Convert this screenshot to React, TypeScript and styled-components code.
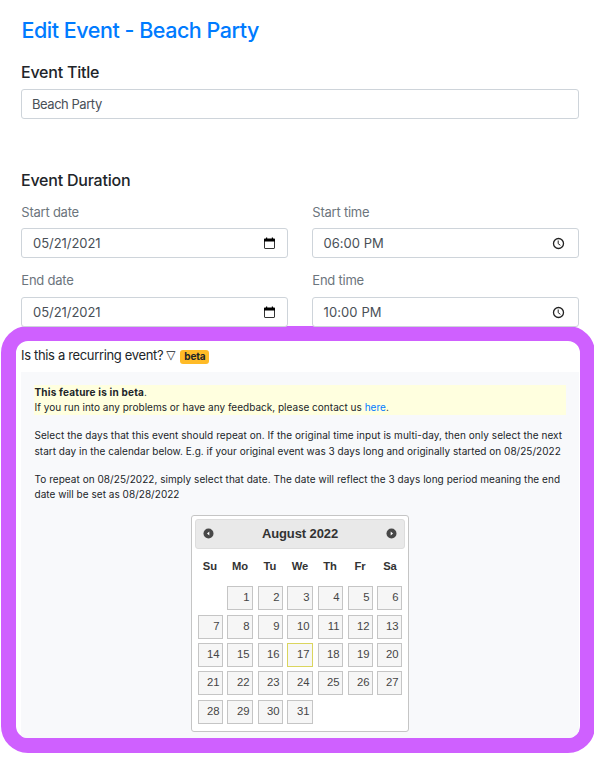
import React from "react";
import styled, { createGlobalStyle } from "styled-components";

const GlobalStyle = createGlobalStyle`
  *, *::before, *::after { box-sizing: border-box; }
  html, body { margin: 0; overflow: hidden; background: #fff; }
  body { font-family: Inter, "Liberation Sans", sans-serif; color: #212529; }
`;

const Page = styled.main`
  width: 594px;
  height: 758px;
  padding-top: 15px;
  overflow: hidden;
`;

const Form = styled.form`
  width: 558px;
  margin-left: 21px;
`;

const PageTitle = styled.h1`
  margin: 0 0 15px;
  padding-left: 0.5px;
  font-size: 21.5px;
  line-height: 30px;
  font-weight: 550;
  letter-spacing: -0.48px;
  color: #007bff;
  white-space: nowrap;
`;

const SectionTitle = styled.h2`
  margin: 0;
  font-size: 16px;
  line-height: 24px;
  font-weight: 500;
  letter-spacing: -0.22px;
`;

const Control = styled.div<{ $spacing?: number; $time?: boolean }>`
  display: flex;
  align-items: center;
  justify-content: space-between;
  height: 30px;
  padding: 0 ${(p) => (p.$time ? 13 : 11)}px 0 ${(p) => (p.$time ? 10.5 : 11)}px;
  border: 1px solid #ced4da;
  border-radius: 3px;
  background: #fff;
  color: #495057;
  font-size: 13px;
  line-height: 28px;
  letter-spacing: ${(p) => p.$spacing ?? 0}px;
`;

const TitleControl = styled(Control)`
  margin: 5px 0 49px;
  padding-left: 10px;
`;

const FieldGrid = styled.div`
  display: grid;
  grid-template-columns: 267px 267px;
  column-gap: 24px;
  margin-top: 10px;
`;

const Field = styled.div<{ $gap: number }>`
  display: flex;
  flex-direction: column;
  gap: ${(p) => p.$gap}px;
  padding-bottom: 12px;

  &:nth-child(n + 3) { padding-bottom: 0; }
`;

const Label = styled.label`
  padding-left: 0.3px;
  font-size: 13px;
  line-height: 20px;
  letter-spacing: -0.23px;
  color: #6c757d;
`;

const PickerIcon = styled.svg`
  display: block;
  flex: none;
  width: 13px;
  height: 13px;
`;

const Highlight = styled.section`
  width: 594px;
  height: 427px;
  margin: -1px 0 0 1px;
  border: 15px solid #cf60ff;
  border-radius: 27px;
  overflow: hidden;
  background: #fff;
`;

const RecurringHeader = styled.div`
  display: flex;
  align-items: center;
  height: 31px;
  padding: 0 0 2px 5px;
  font-size: 13px;
  line-height: 29px;
  letter-spacing: -0.34px;
`;

const Arrow = styled.span`
  width: 10px;
  margin-left: 3px;
  font-family: "DejaVu Sans", sans-serif;
  font-size: 12px;
  letter-spacing: 0;
`;

const Badge = styled.span`
  width: 29px;
  height: 14px;
  margin: 2px 0 0 4px;
  border-radius: 3px;
  background: #ffbb27;
  font-size: 10px;
  line-height: 13px;
  font-weight: 700;
  letter-spacing: -0.2px;
  text-align: center;
`;

const Panel = styled.div`
  height: 366px;
  margin: 0 1px 0 5px;
  padding: 13px;
  background: #f8f9fb;
  font-size: 10px;
  line-height: 15px;
  white-space: nowrap;
`;

const Notice = styled.div`
  height: 30px;
  background: #ffffdf;
`;

const Line = styled.div<{ $spacing: number; $bold?: boolean }>`
  padding-left: 0.5px;
  letter-spacing: ${(p) => p.$spacing}px;
  font-weight: ${(p) => (p.$bold ? 700 : 400)};
`;

const Dot = styled.span`
  font-weight: 400;
`;

const Link = styled.a`
  color: #007bff;
`;

const Paragraph = styled.div<{ $top: number; $line: number }>`
  margin-top: ${(p) => p.$top}px;
  line-height: ${(p) => p.$line}px;
`;

const Calendar = styled.div`
  width: 218px;
  height: 217px;
  margin: 13px auto 0;
  padding: 3px;
  border: 1px solid #c5c5c5;
  border-radius: 3px;
  background: #fff;
  font-family: "Liberation Sans", Arial, sans-serif;
  color: #333;
`;

const CalendarHeader = styled.div`
  display: flex;
  align-items: center;
  justify-content: space-between;
  height: 30px;
  padding: 0 7px;
  border: 1px solid #ddd;
  border-radius: 3px;
  background: #e9e9e9;
`;

const Month = styled.div`
  font-size: 13px;
  line-height: 28px;
  font-weight: 700;
  letter-spacing: -0.1px;
`;

const ArrowIcon = styled.svg`
  display: block;
  width: 11px;
  height: 11px;
  margin-bottom: 2px;
`;

const Weekdays = styled.div`
  display: grid;
  grid-template-columns: repeat(7, 30px);
  height: 37px;
  font-size: 11.2px;
  line-height: 35px;
  font-weight: 700;
  text-align: center;
`;

const Days = styled.div`
  display: grid;
  grid-template-columns: 25px 27px 25px 27px 26px 25px 25px;
  grid-template-rows: 25px 24px 24px 25px 24px;
  gap: 4px;
  padding-left: 3px;
`;

const Day = styled.div<{ $wide: boolean; $today: boolean; $column: number }>`
  grid-column: ${(p) => p.$column};
  width: ${(p) => (p.$wide ? 26 : 25)}px;
  height: 24px;
  padding-right: 2.5px;
  border: 1px solid ${(p) => (p.$today ? "#dad55e" : "#c5c5c5")};
  background: #f6f6f6;
  color: #454545;
  font-size: 11.3px;
  line-height: 21px;
  text-align: right;
`;

const CalendarGlyph = () => (
  <PickerIcon viewBox="0 0 13 13">
    <path d="M1.5 3.5v7.5c0 .3.2.5.5.5h9c.3 0 .5-.2.5-.5V3.5" fill="none" stroke="#333" />
    <path d="M1 4.6V2.5c0-.7.4-1 1-1h1V.4h1.2v1.1h4.6V.4H10v1.1h1c.6 0 1 .3 1 1v2.1z" fill="#000" />
  </PickerIcon>
);

const ClockGlyph = () => (
  <PickerIcon viewBox="0 0 13 13" fill="none" stroke="#222">
    <circle cx="6.5" cy="6.5" r="5" strokeWidth="1.3" />
    <path d="M6.2 3.5v3.2l2.2 1.6" />
  </PickerIcon>
);

const MonthArrow = ({ next = false }: { next?: boolean }) => (
  <ArrowIcon viewBox="0 0 11 11">
    <circle cx="5.5" cy="5.5" r="5" fill="#484848" />
    <path d={next ? "M4.7 3.5v4L7 5.5z" : "M6.3 3.5v4L4 5.5z"} fill="#fff" />
  </ArrowIcon>
);

const fields = [
  { label: "Start date", value: "05/21/2021", kind: "date", gap: 6, spacing: -0.05 },
  { label: "Start time", value: "06:00 PM", kind: "time", gap: 6, spacing: 0.03 },
  { label: "End date", value: "05/21/2021", kind: "date", gap: 7, spacing: -0.05 },
  { label: "End time", value: "10:00 PM", kind: "time", gap: 7, spacing: 0.1 },
];

const weekdays = ["Su", "Mo", "Tu", "We", "Th", "Fr", "Sa"];
const days = Array.from({ length: 31 }, (_, i) => i + 1);

export default function App() {
  return (
    <Page>
      <GlobalStyle />
      <Form>
        <PageTitle>Edit Event - Beach Party</PageTitle>
        <SectionTitle>Event Title</SectionTitle>
        <TitleControl $spacing={-0.46}>Beach Party</TitleControl>
        <SectionTitle>Event Duration</SectionTitle>
        <FieldGrid>
          {fields.map((f) => (
            <Field key={f.label} $gap={f.gap}>
              <Label>{f.label}</Label>
              <Control $spacing={f.spacing} $time={f.kind === "time"}>
                <span>{f.value}</span>
                {f.kind === "date" ? <CalendarGlyph /> : <ClockGlyph />}
              </Control>
            </Field>
          ))}
        </FieldGrid>
      </Form>
      <Highlight>
        <RecurringHeader>
          <span>Is this a recurring event?</span>
          <Arrow>▽</Arrow>
          <Badge>beta</Badge>
        </RecurringHeader>
        <Panel>
          <Notice>
            <Line $spacing={0.2} $bold>This feature is in beta<Dot>.</Dot></Line>
            <Line $spacing={0.018}>
              If you run into any problems or have any feedback, please contact us <Link>here</Link>.
            </Line>
          </Notice>
          <Paragraph $top={12} $line={16}>
            <Line $spacing={0.059}>
              Select the days that this event should repeat on. If the original time input is multi-day, then only select the next
            </Line>
            <Line $spacing={0.025}>
              start day in the calendar below. E.g. if your original event was 3 days long and originally started on 08/25/2022
            </Line>
          </Paragraph>
          <Paragraph $top={13} $line={15}>
            <Line $spacing={0.048}>
              To repeat on 08/25/2022, simply select that date. The date will reflect the 3 days long period meaning the end
            </Line>
            <Line $spacing={0.03}>date will be set as 08/28/2022</Line>
          </Paragraph>
          <Calendar>
            <CalendarHeader>
              <MonthArrow />
              <Month>August 2022</Month>
              <MonthArrow next />
            </CalendarHeader>
            <Weekdays>
              {weekdays.map((d) => (
                <span key={d}>{d}</span>
              ))}
            </Weekdays>
            <Days>
              {days.map((d) => (
                <Day key={d} $column={(d % 7) + 1} $wide={d % 7 === 1 || d % 7 === 3} $today={d === 17}>
                  {d}
                </Day>
              ))}
            </Days>
          </Calendar>
        </Panel>
      </Highlight>
    </Page>
  );
}
